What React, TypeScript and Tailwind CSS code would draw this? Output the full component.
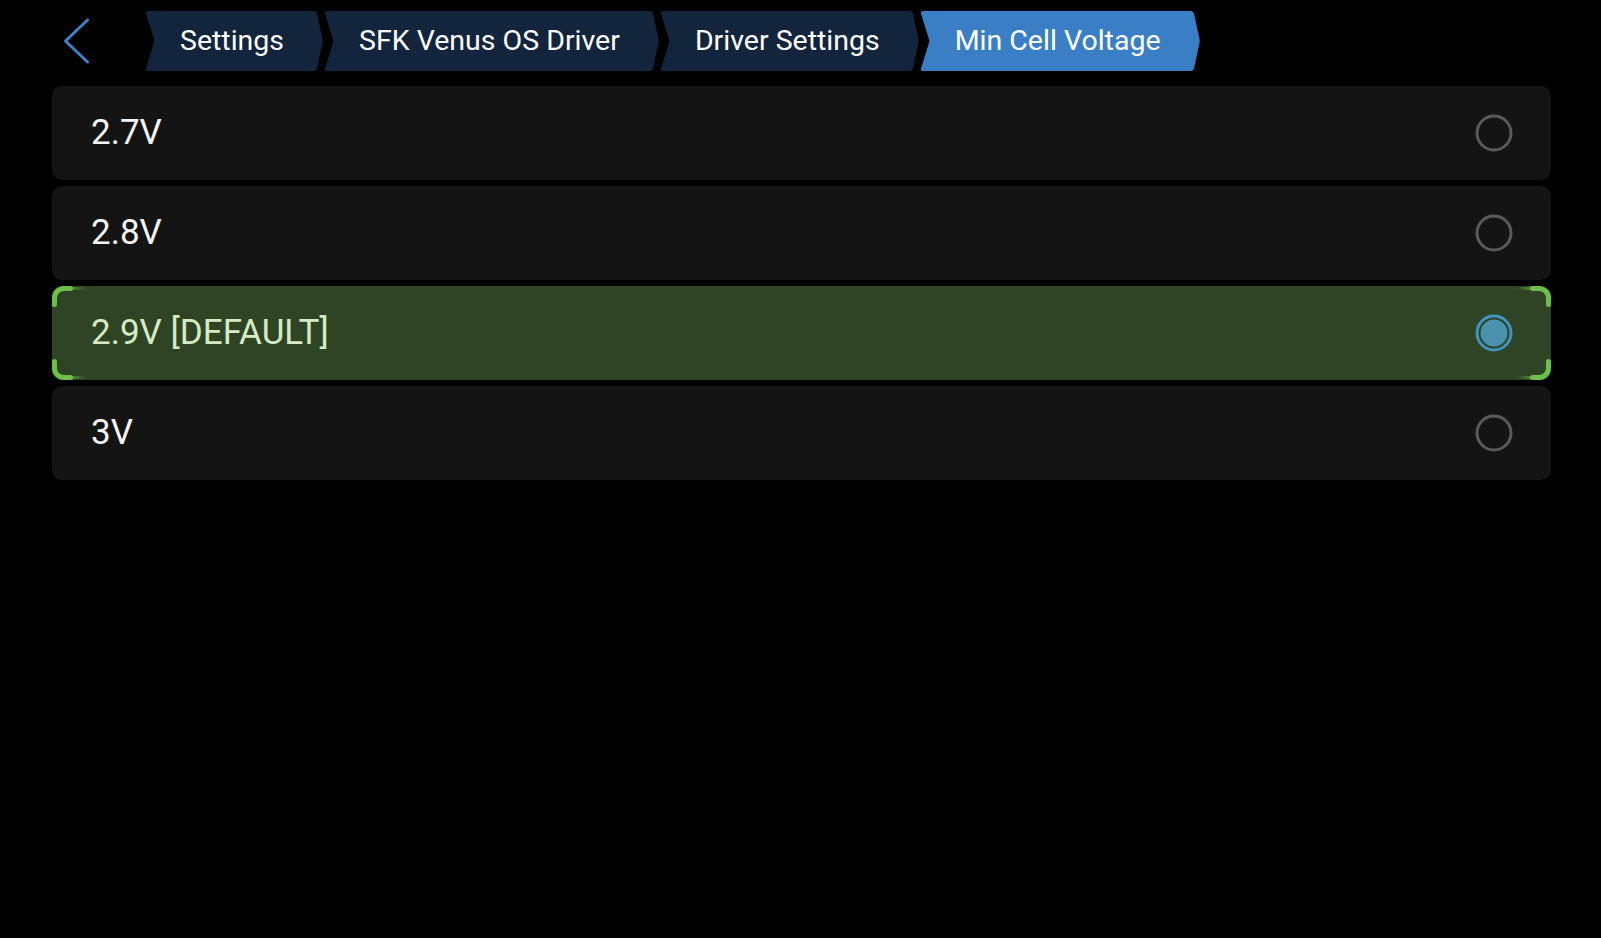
import React from "react";

const crumbs = ["Settings", "SFK Venus OS Driver", "Driver Settings", "Min Cell Voltage"];

const options = [
  { label: "2.7V", selected: false },
  { label: "2.8V", selected: false },
  { label: "2.9V [DEFAULT]", selected: true },
  { label: "3V", selected: false },
];

function Crumb({ label, active }: { label: string; active: boolean }) {
  const fill = active ? "#3a7fc6" : "#13253c";
  return (
    <div className="flex h-[60px]">
      <svg width="11" height="60" viewBox="0 0 11 60" className="block shrink-0">
        <path d="M3,0 H11 V60 H3 Q0,60 1,57.5 L9.5,30 L1,2.5 Q0,0 3,0 Z" fill={fill} />
      </svg>
      <div
        className={`flex items-center pl-[24px] pr-[28px] text-[28.5px] text-white ${
          active ? "bg-[#3a7fc6]" : "bg-[#13253c]"
        }`}
      >
        {label}
      </div>
      <svg width="11" height="60" viewBox="0 0 11 60" className="block shrink-0">
        <path d="M0,0 H2 Q4,0 5,2.5 L10.5,28 Q11,30 10.5,32 L5,57.5 Q4,60 2,60 H0 Z" fill={fill} />
      </svg>
    </div>
  );
}

function Radio({ selected }: { selected: boolean }) {
  return (
    <svg width="38" height="38" viewBox="0 0 38 38" className="shrink-0">
      {selected ? (
        <>
          <circle cx="19" cy="19" r="17" fill="none" stroke="#3f95c2" strokeWidth="3" />
          <circle cx="19" cy="19" r="13.5" fill="#4b92ae" />
        </>
      ) : (
        <circle cx="19" cy="19" r="17" fill="none" stroke="#595959" strokeWidth="3" />
      )}
    </svg>
  );
}

// one focus bracket, drawn for the top-left corner and flipped for the others
function Corner({ className }: { className: string }) {
  return (
    <svg width="34" height="24" viewBox="0 0 34 24" className={`absolute ${className}`}>
      <defs>
        <linearGradient id="fade" x1="0" x2="1" y1="0" y2="0">
          <stop offset="0" stopColor="#6cbf48" stopOpacity="0.6" />
          <stop offset="1" stopColor="#6cbf48" stopOpacity="0" />
        </linearGradient>
      </defs>
      <rect x="19" y="1" width="15" height="3" fill="url(#fade)" />
      <path
        d="M2.5,18.5 V12 A9.5,9.5 0 0 1 12,2.5 H18.5"
        fill="none"
        stroke="#6cbf48"
        strokeWidth="5"
        strokeLinecap="round"
      />
    </svg>
  );
}

export default function App() {
  return (
    <div className="h-screen w-full overflow-hidden bg-black font-['Roboto','Liberation_Sans',sans-serif]">
      <div className="flex items-center pl-[62px] pt-[11px]">
        <svg width="28" height="48" viewBox="0 0 28 48" className="shrink-0">
          <path d="M25.5,3 L3.5,24 L25.5,45" fill="none" stroke="#3b82c8" strokeWidth="3" strokeLinecap="round" strokeLinejoin="round" />
        </svg>
        <div className="ml-[55px] flex gap-[1px]">
          {crumbs.map((c, i) => (
            <Crumb key={c} label={c} active={i === crumbs.length - 1} />
          ))}
        </div>
      </div>

      <div className="mt-[15px] flex flex-col gap-[6px] pl-[52px] pr-[50px]">
        {options.map((o) => (
          <div
            key={o.label}
            className={`relative flex h-[94px] items-center justify-between rounded-[10px] pl-[39px] pr-[38px] ${
              o.selected ? "bg-[#2f4425]" : "bg-[#141414]"
            }`}
          >
            {o.selected && (
              <>
                <Corner className="left-0 top-0" />
                <Corner className="bottom-0 left-0 -scale-y-100" />
                <Corner className="right-0 top-0 -scale-x-100" />
                <Corner className="bottom-0 right-0 -scale-x-100 -scale-y-100" />
              </>
            )}
            <span className={`text-[35px] ${o.selected ? "text-[#d4ebc4]" : "text-[#f4f4f4]"}`}>
              {o.label}
            </span>
            <Radio selected={o.selected} />
          </div>
        ))}
      </div>
    </div>
  );
}
